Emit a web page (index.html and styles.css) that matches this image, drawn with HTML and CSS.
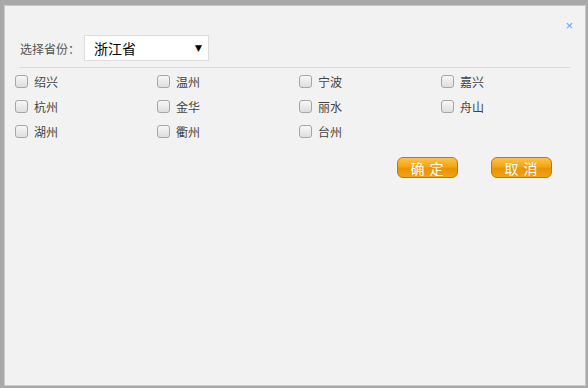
FILE: index.html
```html
<!DOCTYPE html>
<html lang="zh-CN">
<head>
    <meta charset="UTF-8">
    <title>选择城市</title>
    <link rel="stylesheet" href="styles.css">
</head>
<body>
    <div class="dialog">
        <a class="close" href="#">×</a>

        <!-- province selector -->
        <div class="province-row">
            <label for="province">选择省份：</label>
            <div class="select-box" id="province">
                <span>浙江省</span>
                <span class="arrow">▼</span>
            </div>
        </div>
        <div class="divider"></div>

        <!-- cities of the chosen province -->
        <div class="city-grid">
            <label class="city"><input type="checkbox"><span>绍兴</span></label>
            <label class="city"><input type="checkbox"><span>温州</span></label>
            <label class="city"><input type="checkbox"><span>宁波</span></label>
            <label class="city"><input type="checkbox"><span>嘉兴</span></label>
            <label class="city"><input type="checkbox"><span>杭州</span></label>
            <label class="city"><input type="checkbox"><span>金华</span></label>
            <label class="city"><input type="checkbox"><span>丽水</span></label>
            <label class="city"><input type="checkbox"><span>舟山</span></label>
            <label class="city"><input type="checkbox"><span>湖州</span></label>
            <label class="city"><input type="checkbox"><span>衢州</span></label>
            <label class="city"><input type="checkbox"><span>台州</span></label>
        </div>

        <div class="actions">
            <button class="btn">确定</button>
            <button class="btn">取消</button>
        </div>
    </div>
</body>
</html>
```

FILE: styles.css
```css
body {
    margin: 0;
    padding: 0;
    background-color: #a9a9a9;
    font-family: "Microsoft YaHei", "Noto Sans CJK SC", sans-serif;
    font-size: 12px;
    color: #444;
}
.dialog {
    position: relative;
    box-sizing: border-box;
    width: 582px;
    height: 381px;
    margin: 5px 0 0 4px;
    background-color: #f2f2f2;
    border: 1px solid #c9c9c9;
}
.close {
    position: absolute;
    top: 12px;
    right: 12px;
    font-family: "Liberation Sans", sans-serif;
    font-size: 13px;
    color: #5aa8f2;
    text-decoration: none;
}
.province-row {
    display: flex;
    align-items: center;
    padding: 29px 0 0 15px;
}
.province-row label {
    color: #555;
    width: 64px;
}
.select-box {
    box-sizing: border-box;
    display: flex;
    align-items: center;
    justify-content: space-between;
    width: 125px;
    height: 26px;
    padding: 0 6px 0 9px;
    background-color: #fff;
    border: 1px solid #ddd;
    font-size: 14px;
    color: #000;
}
.select-box .arrow {
    font-family: "DejaVu Sans", sans-serif;
    font-size: 9px;
}
.divider {
    width: 550px;
    margin: 6px 0 0 15px;
    border-top: 1px solid #d9d9d9;
}
.city-grid {
    display: grid;
    grid-template-columns: repeat(4, 142px);
    grid-auto-rows: 25px;
    margin-top: 1px;
    padding-left: 10px;
}
.city {
    display: flex;
    align-items: center;
}
.city input {
    appearance: none;
    -webkit-appearance: none;
    box-sizing: border-box;
    width: 13px;
    height: 13px;
    margin: 0;
    border: 1px solid #a6a6a6;
    border-radius: 3px;
    background: linear-gradient(#f7f7f7, #dedede);
}
.city span {
    margin-left: 6px;
}
.actions {
    display: flex;
    justify-content: flex-end;
    gap: 33px;
    margin-top: 13px;
    padding-right: 33px;
}
.btn {
    box-sizing: border-box;
    width: 61px;
    height: 21px;
    padding: 0 0 0 4px;
    border: 1px solid #c47800;
    border-radius: 6px;
    background: linear-gradient(#fcc24a 0%, #f3a615 45%, #e99400 55%, #f0a21a 100%);
    color: #fff;
    font-family: "Microsoft YaHei", "Noto Sans CJK SC", sans-serif;
    font-size: 14px;
    line-height: 18px;
    letter-spacing: 5px;
}
```
